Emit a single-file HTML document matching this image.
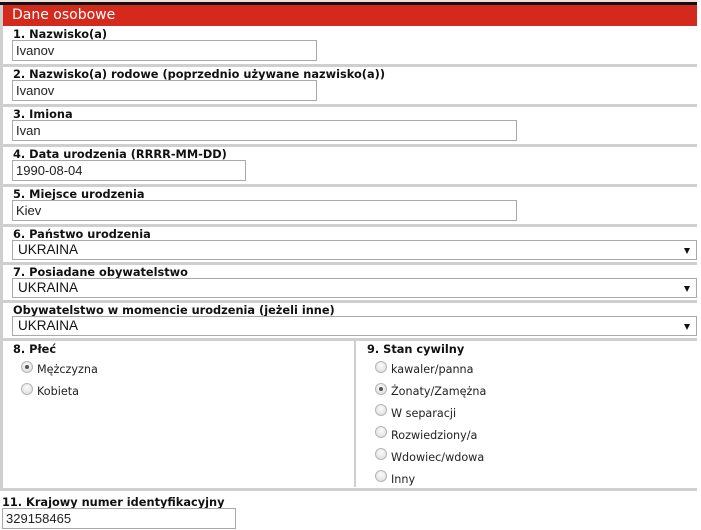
<!DOCTYPE html>
<html><head><meta charset="utf-8"><style>
*{margin:0;padding:0;box-sizing:border-box}
body{width:701px;height:530px;background:#fff;position:relative;overflow:hidden;font-family:"DejaVu Sans",Verdana,sans-serif}
.a{position:absolute}
.lb{position:absolute;font-size:11.35px;font-weight:bold;color:#111;left:13px;white-space:nowrap}
.in{position:absolute;border:1px solid #a9a9a9;background:#fff;font-family:"Liberation Sans",Arial,sans-serif;font-size:13px;color:#222;padding:1px 0 0 3px;height:21px;line-height:17px}
.sel{position:absolute;left:12px;width:685px;height:20px;border:1px solid #a9a9a9;font-family:"Liberation Sans",Arial,sans-serif;font-size:13.5px;color:#111;padding:0 0 0 5px;line-height:18px}
.sel:after{content:"";position:absolute;right:6px;top:7px;border-left:3.5px solid transparent;border-right:3.5px solid transparent;border-top:6px solid #111}
.sep{position:absolute;left:3px;width:694px;height:3px;background:#cfcfcf}
.r{position:absolute;width:12px;height:12px;border-radius:50%;border:1px solid #b5b5b5;background:radial-gradient(circle at 50% 35%,#fafafa,#dcdcdc)}
.r.on:after{content:"";position:absolute;left:3px;top:3px;width:4px;height:4px;border-radius:50%;background:#555}
.t{position:absolute;font-size:11.2px;color:#222;white-space:nowrap}
</style></head><body>
<div class="a" style="left:0;top:0;width:697px;height:2px;background:#f3dede"></div>
<div class="a" style="left:0;top:2px;width:697px;height:3px;background:#111"></div>
<div class="a" style="left:0;top:5px;width:3px;height:484px;background:#cfcfcf"></div>
<div class="a" style="left:3px;top:5px;width:694px;height:21px;background:#d42a1e;color:#fff;font-size:14px;padding-left:9px;line-height:21px">Dane osobowe</div>

<div class="lb" style="top:27px">1. Nazwisko(a)</div>
<div class="in" style="left:12px;top:40px;width:305px">Ivanov</div>
<div class="sep" style="top:64px"></div>
<div class="lb" style="top:67px">2. Nazwisko(a) rodowe (poprzednio używane nazwisko(a))</div>
<div class="in" style="left:12px;top:80px;width:305px">Ivanov</div>
<div class="sep" style="top:104px"></div>
<div class="lb" style="top:107px">3. Imiona</div>
<div class="in" style="left:12px;top:120px;width:505px">Ivan</div>
<div class="sep" style="top:144px"></div>
<div class="lb" style="top:147px">4. Data urodzenia (RRRR-MM-DD)</div>
<div class="in" style="left:12px;top:160px;width:234px">1990-08-04</div>
<div class="sep" style="top:184px"></div>
<div class="lb" style="top:187px">5. Miejsce urodzenia</div>
<div class="in" style="left:12px;top:200px;width:505px">Kiev</div>
<div class="sep" style="top:224px"></div>
<div class="lb" style="top:227px">6. Państwo urodzenia</div>
<div class="sel" style="top:240px">UKRAINA</div>
<div class="sep" style="top:262px"></div>
<div class="lb" style="top:265px">7. Posiadane obywatelstwo</div>
<div class="sel" style="top:278px">UKRAINA</div>
<div class="sep" style="top:300px"></div>
<div class="lb" style="top:303px">Obywatelstwo w momencie urodzenia (jeżeli inne)</div>
<div class="sel" style="top:316px">UKRAINA</div>
<div class="sep" style="top:338px"></div>

<div class="lb" style="top:342px">8. Płeć</div>
<div class="r on" style="left:21px;top:361px"></div><div class="t" style="left:37px;top:363px">Mężczyzna</div>
<div class="r" style="left:21px;top:383px"></div><div class="t" style="left:37px;top:385px">Kobieta</div>
<div class="a" style="left:354px;top:341px;width:2px;height:146px;background:#cfcfcf"></div>
<div class="lb" style="left:367px;top:342px">9. Stan cywilny</div>
<div class="r" style="left:375px;top:361px"></div><div class="t" style="left:391px;top:363px">kawaler/panna</div>
<div class="r on" style="left:375px;top:383px"></div><div class="t" style="left:391px;top:385px">Żonaty/Zamężna</div>
<div class="r" style="left:375px;top:404px"></div><div class="t" style="left:391px;top:407px">W separacji</div>
<div class="r" style="left:375px;top:426px"></div><div class="t" style="left:391px;top:429px">Rozwiedziony/a</div>
<div class="r" style="left:375px;top:448px"></div><div class="t" style="left:391px;top:451px">Wdowiec/wdowa</div>
<div class="r" style="left:375px;top:470px"></div><div class="t" style="left:391px;top:473px">Inny</div>
<div class="a" style="left:0;top:488px;width:697px;height:3px;background:#cfcfcf"></div>

<div class="lb" style="left:2px;top:495px">11. Krajowy numer identyfikacyjny</div>
<div class="in" style="left:2px;top:508px;width:234px">329158465</div>
</body></html>
